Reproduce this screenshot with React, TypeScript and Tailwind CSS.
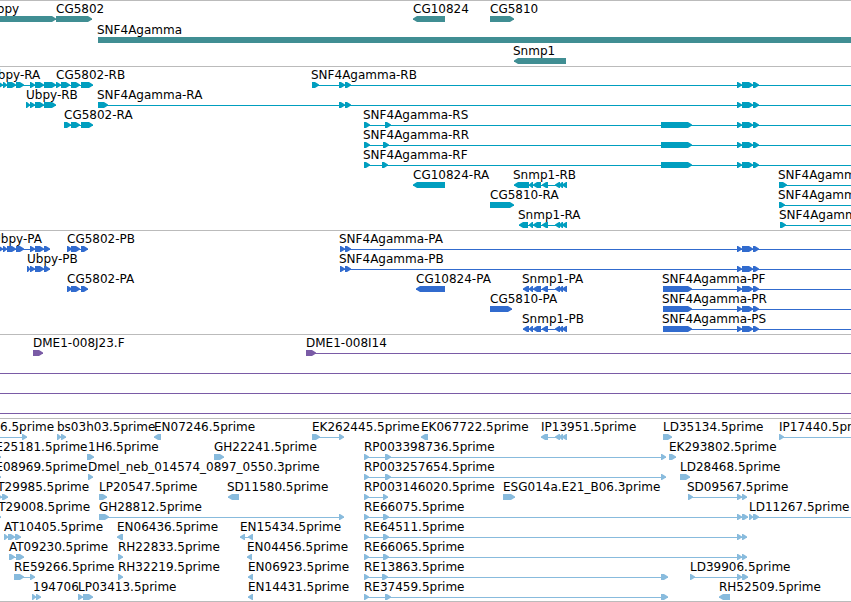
type Span = [start: number, end: number];

type Feature = {
  name?: string;
  at?: number;
  exons?: Span[];
  reverse?: boolean;
  // where the intron line starts or stops when it leaves the view
  from?: number;
  to?: number;
  // a plain bar without an arrow head
  bar?: boolean;
};

type Track = {
  id: string;
  fill: string;
  row: string;
  pad: string;
  rows: Feature[][];
};

const FAR = 4000;
const TIP = 5;

const tail: Span[] = [[737, 742], [742, 753], [753, 759]];
const snmpEnd: Span[] = [[555, 560], [559, 563], [562, 567]];
const snmp: Span[] = [[529, 533], [533, 541], [542, 548], ...snmpEnd];

const tracks: Track[] = [
  {
    id: "Genes",
    fill: "fill-[#408e93]",
    row: "h-[21px]",
    pad: "pb-[2px]",
    rows: [
      [
        { name: "Ubpy", at: -12, exons: [[-30, 56]] },
        { name: "CG5802", at: 56, exons: [[56, 92]] },
        { name: "CG10824", at: 413, exons: [[413, 445]], reverse: true },
        { name: "CG5810", at: 490, exons: [[490, 514]] },
      ],
      [{ name: "SNF4Agamma", at: 97, exons: [[98, FAR]], bar: true }],
      [{ name: "Snmp1", at: 513, exons: [[514, 566]], reverse: true }],
    ],
  },
  {
    id: "Transcripts",
    fill: "fill-[#009ebf]",
    row: "h-5",
    pad: "pb-[3px]",
    rows: [
      [
        { name: "Ubpy-RA", at: -11, exons: [[-6, 3], [3, 7], [7, 16], [16, 24], [30, 35], [35, 44], [44, 56]] },
        { name: "CG5802-RB", at: 56, exons: [[56, 61], [61, 70], [71, 80], [81, 93]] },
        { name: "SNF4Agamma-RB", at: 311, exons: [[312, 319], [339, 345], [345, 351], ...tail], to: FAR },
      ],
      [
        { name: "Ubpy-RB", at: 26, exons: [[26, 30], [30, 35], [35, 44], [44, 56]] },
        { name: "SNF4Agamma-RA", at: 97, exons: [[98, 108], [339, 345], [345, 351], ...tail], to: FAR },
      ],
      [
        { name: "CG5802-RA", at: 64, exons: [[64, 71], [71, 80], [81, 93]] },
        { name: "SNF4Agamma-RS", at: 363, exons: [[364, 370], [385, 391], [661, 692], ...tail], to: FAR },
      ],
      [{ name: "SNF4Agamma-RR", at: 363, exons: [[364, 370], [383, 389], [661, 692], ...tail], to: FAR }],
      [{ name: "SNF4Agamma-RF", at: 363, exons: [[364, 370], [382, 388], [661, 692], ...tail], to: FAR }],
      [
        { name: "CG10824-RA", at: 413, exons: [[413, 445]], reverse: true },
        { name: "Snmp1-RB", at: 513, exons: [[514, 529], ...snmp], reverse: true },
        { name: "SNF4Agamma", at: 778, exons: [[779, 787]], to: FAR },
      ],
      [
        { name: "CG5810-RA", at: 490, exons: [[490, 514]] },
        { name: "SNF4Agamma", at: 778, exons: [[779, 785]], to: FAR },
      ],
      [
        { name: "Snmp1-RA", at: 518, exons: [[519, 528], ...snmp], reverse: true },
        { name: "SNF4Agamma", at: 779, exons: [[780, 786]], to: FAR },
      ],
    ],
  },
  {
    id: "Proteins",
    fill: "fill-[#316bce]",
    row: "h-5",
    pad: "pb-[3px]",
    rows: [
      [
        { name: "Ubpy-PA", at: -8, exons: [[-4, 3], [3, 7], [7, 16], [16, 24], [30, 35], [35, 44], [44, 50]] },
        { name: "CG5802-PB", at: 67, exons: [[67, 72], [71, 80], [81, 88]] },
        { name: "SNF4Agamma-PA", at: 339, exons: [[340, 345], [345, 351], ...tail], to: FAR },
      ],
      [
        { name: "Ubpy-PB", at: 27, exons: [[27, 30], [30, 35], [35, 44], [44, 50]] },
        { name: "SNF4Agamma-PB", at: 339, exons: [[340, 345], [345, 351], ...tail], to: FAR },
      ],
      [
        { name: "CG5802-PA", at: 67, exons: [[67, 72], [71, 80], [81, 88]] },
        { name: "CG10824-PA", at: 416, exons: [[416, 445]], reverse: true },
        { name: "Snmp1-PA", at: 522, exons: [[523, 529], ...snmp], reverse: true },
        { name: "SNF4Agamma-PF", at: 662, exons: [[663, 692], ...tail], to: FAR },
      ],
      [
        { name: "CG5810-PA", at: 490, exons: [[490, 512]] },
        { name: "SNF4Agamma-PR", at: 662, exons: [[663, 692], ...tail], to: FAR },
      ],
      [
        { name: "Snmp1-PB", at: 522, exons: [[523, 529], ...snmp], reverse: true },
        { name: "SNF4Agamma-PS", at: 662, exons: [[663, 692], ...tail], to: FAR },
      ],
    ],
  },
  {
    id: "BAC ends",
    fill: "fill-[#7a5ba6]",
    row: "h-5",
    pad: "pb-[3px]",
    rows: [
      [
        { name: "DME1-008J23.F", at: 33, exons: [[33, 43]] },
        { name: "DME1-008I14", at: 306, exons: [[306, 316]], to: FAR },
      ],
      [{ from: 0, to: FAR }],
      [{ from: 0, to: FAR }],
      [{ from: 0, to: FAR }],
    ],
  },
  {
    id: "ESTs",
    fill: "fill-[#88bbdd]",
    row: "h-5",
    pad: "pb-[2px]",
    rows: [
      [
        { name: "6.5prime", at: 0, exons: [[22, 27]], from: 0 },
        { name: "bs03h03.5prime", at: 57, exons: [[57, 61], [61, 66]] },
        { name: "EN07246.5prime", at: 154, exons: [[154, 161]], reverse: true },
        { name: "EK262445.5prime", at: 312, exons: [[312, 320], [339, 344]] },
        { name: "EK067722.5prime", at: 421, exons: [[421, 428]], reverse: true },
        { name: "IP13951.5prime", at: 541, exons: [[541, 548], ...snmpEnd], reverse: true },
        { name: "LD35134.5prime", at: 663, exons: [[663, 672]] },
        { name: "IP17440.5prime", at: 779, exons: [[779, 784]], to: FAR },
      ],
      [
        { name: "RE25181.5prime", at: -13, exons: [[-5, 1]] },
        { name: "1H6.5prime", at: 88, exons: [[87, 94]] },
        { name: "GH22241.5prime", at: 214, exons: [[214, 224]] },
        { name: "RP003398736.5prime", at: 364, exons: [[364, 369], [385, 391], [661, 666]] },
        { name: "EK293802.5prime", at: 669, exons: [[669, 676]] },
      ],
      [
        { name: "RE08969.5prime", at: -13, exons: [[-5, 1]] },
        { name: "Dmel_neb_014574_0897_0550.3prime", at: 88, exons: [[88, 93]] },
        { name: "RP003257654.5prime", at: 364, exons: [[364, 369], [385, 391], [661, 666]] },
        { name: "LD28468.5prime", at: 680, exons: [[680, 690]] },
      ],
      [
        { name: "AT29985.5prime", at: -10, exons: [[-3, 2], [2, 8]] },
        { name: "LP20547.5prime", at: 99, exons: [[99, 107]] },
        { name: "SD11580.5prime", at: 227, exons: [[228, 239]], reverse: true },
        { name: "RP003146020.5prime", at: 364, exons: [[364, 369], [383, 388]] },
        { name: "ESG014a.E21_B06.3prime", at: 503, exons: [[503, 515]] },
        { name: "SD09567.5prime", at: 687, exons: [[688, 693], [737, 742], [742, 747]] },
      ],
      [
        { name: "AT29008.5prime", at: -9, exons: [[-5, 1]] },
        { name: "GH28812.5prime", at: 99, exons: [[99, 109], [339, 344]] },
        { name: "RE66075.5prime", at: 364, exons: [[364, 369], [383, 389], [737, 742], [742, 748]] },
        { name: "LD11267.5prime", at: 749, exons: [[749, 753], [753, 759]], to: FAR },
      ],
      [
        { name: "AT10405.5prime", at: 4, exons: [[4, 8], [8, 15], [15, 21]] },
        { name: "EN06436.5prime", at: 117, exons: [[117, 123]], reverse: true },
        { name: "EN15434.5prime", at: 240, exons: [[240, 245], [248, 253]], reverse: true },
        { name: "RE64511.5prime", at: 364, exons: [[364, 369], [383, 389], [737, 742], [742, 747]] },
      ],
      [
        { name: "AT09230.5prime", at: 9, exons: [[9, 15], [16, 24]] },
        { name: "RH22833.5prime", at: 118, exons: [[118, 123]] },
        { name: "EN04456.5prime", at: 247, exons: [[247, 252]], reverse: true },
        { name: "RE66065.5prime", at: 364, exons: [[364, 369], [383, 389], [737, 742], [742, 747]] },
      ],
      [
        { name: "RE59266.5prime", at: 14, exons: [[14, 24], [30, 35]] },
        { name: "RH32219.5prime", at: 118, exons: [[118, 123]] },
        { name: "EN06923.5prime", at: 248, exons: [[248, 253]], reverse: true },
        { name: "RE13863.5prime", at: 364, exons: [[364, 369], [382, 388], [661, 668]] },
        { name: "LD39906.5prime", at: 690, exons: [[690, 695], [737, 742], [742, 748]] },
      ],
      [
        { name: "194706", at: 33, exons: [[32, 36], [36, 41]] },
        { name: "LP03413.5prime", at: 78, exons: [[78, 83], [83, 93]] },
        { name: "EN14431.5prime", at: 248, exons: [[248, 253]], reverse: true },
        { name: "RE37459.5prime", at: 364, exons: [[364, 369], [385, 391], [661, 668]] },
        { name: "RH52509.5prime", at: 719, exons: [[719, 730]], reverse: true },
      ],
    ],
  },
];

// Blunt-nosed arrow, six units tall, so short exons stay solid.
function arrow([start, end]: Span, reverse?: boolean) {
  const tip = Math.min(TIP, end - start) - 1;
  return reverse
    ? `${end},0 ${start + tip},0 ${start},2.4 ${start},3.6 ${start + tip},6 ${end},6`
    : `${start},0 ${end - tip},0 ${end},2.4 ${end},3.6 ${end - tip},6 ${start},6`;
}

function Glyph({ feature }: { feature: Feature }) {
  const exons = feature.exons ?? [];
  const from = feature.from ?? exons[0][0];
  const to = feature.to ?? exons[exons.length - 1][1];

  if (feature.bar) {
    return <rect x={from} y={0} width={to - from} height={6} />;
  }
  return (
    <g>
      <rect x={from} y={3} width={to - from} height={1} />
      {exons.map((exon) => (
        <polygon key={exon[0]} points={arrow(exon, feature.reverse)} />
      ))}
    </g>
  );
}

function Row({ features, height, fill }: { features: Feature[]; height: string; fill: string }) {
  return (
    <div className={height}>
      <div className="relative h-[15px]">
        {features.map((feature) =>
          feature.name ? (
            <span
              key={feature.name}
              className="absolute top-0 whitespace-nowrap leading-4"
              style={{ left: feature.at }}
            >
              {feature.name}
            </span>
          ) : null
        )}
      </div>
      <svg className={`block h-[6px] w-full overflow-visible ${fill}`} aria-hidden="true">
        {features.map((feature, i) => (
          <Glyph key={i} feature={feature} />
        ))}
      </svg>
    </div>
  );
}

export default function App() {
  return (
    <main className="w-full overflow-hidden border-b border-[#bbbbbb] bg-white font-['DejaVu_Sans',sans-serif] text-xs text-black">
      {tracks.map((track) => (
        <section
          key={track.id}
          aria-label={track.id}
          className={`border-t border-[#bbbbbb] ${track.pad}`}
        >
          {track.rows.map((features, i) => (
            <Row key={i} features={features} height={track.row} fill={track.fill} />
          ))}
        </section>
      ))}
    </main>
  );
}
